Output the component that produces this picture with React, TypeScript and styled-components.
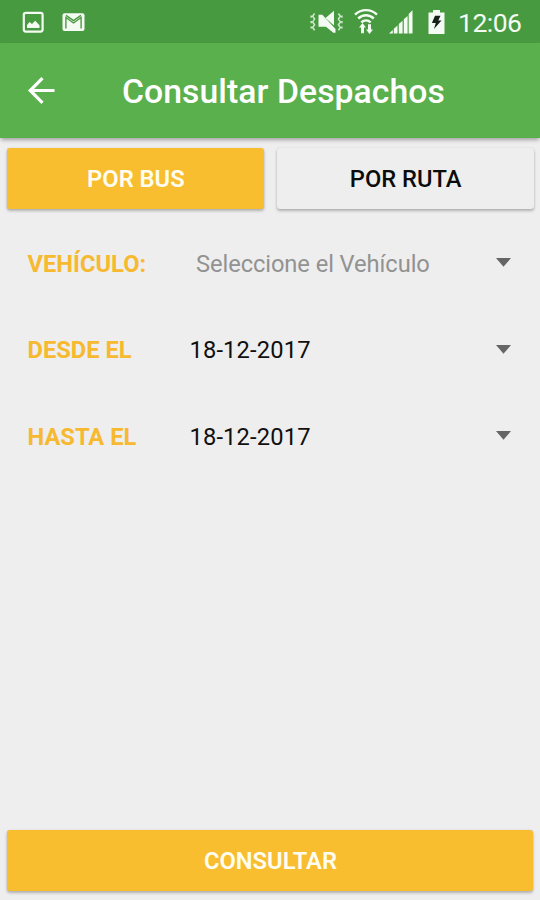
import React from "react";
import styled, { createGlobalStyle } from "styled-components";

const GlobalStyle = createGlobalStyle`
  * { box-sizing: border-box; }
  body {
    margin: 0;
    background: #eeeeee;
    font-family: Roboto, sans-serif;
  }
  button { font-family: inherit; cursor: pointer; }
`;

const Screen = styled.div`
  width: 540px;
  height: 900px;
  display: flex;
  flex-direction: column;
  overflow: hidden;
  background: #eeeeee;
`;

const StatusBar = styled.div`
  height: 43px;
  flex: none;
  display: flex;
  justify-content: space-between;
  padding: 0 18px 0 22px;
  background: #489a41;
  color: #f4fbf2;
`;

const StatusGroup = styled.div<{ $gap: number }>`
  display: flex;
  align-items: center;
  gap: ${(p) => p.$gap}px;

  svg { display: block; flex: none; }
`;

const StatusIcons = styled(StatusGroup)`
  margin-right: 2px;
`;

const Clock = styled.span`
  width: 64px;
  padding-top: 2px;
  font-size: 26.5px;
  line-height: 32px;
  letter-spacing: -0.5px;
  white-space: nowrap;
`;

const AppBar = styled.header`
  height: 95px;
  flex: none;
  display: flex;
  align-items: center;
  padding-left: 20px;
  background: #5ab04d;
  box-shadow: 0 3px 4px -1px rgba(0, 0, 0, 0.32);
  color: #fff;
`;

const BackButton = styled.button`
  width: 42px;
  height: 42px;
  padding: 0;
  border: 0;
  background: none;
  color: inherit;

  svg { display: block; }
`;

const Title = styled.h1`
  margin: 2px 0 0 60px;
  font-size: 33.75px;
  line-height: 40px;
  font-weight: 500;
  letter-spacing: 0.05px;
  white-space: nowrap;
`;

const Tabs = styled.div`
  display: flex;
  gap: 13px;
  padding: 10px 6.5px 0 7px;
`;

const Button = styled.button<{ $primary?: boolean }>`
  flex: 1;
  height: 61px;
  padding: 0 0 0 1px;
  border: 0;
  border-radius: 3px;
  background: ${(p) => (p.$primary ? "#f8be30" : "#eeeeee")};
  color: ${(p) => (p.$primary ? "#fffdf0" : "#0c0c0c")};
  font-size: 23.7px;
  font-weight: ${(p) => (p.$primary ? 600 : 500)};
  box-shadow: 0 2px 3px rgba(0, 0, 0, 0.25), 0 0 2px rgba(0, 0, 0, 0.1);
`;

const Form = styled.div`
  flex: 1;
  padding: 11px 29.5px 0 27.5px;
`;

const Row = styled.div`
  height: 86.5px;
  display: grid;
  grid-template-columns: 162px 1fr 15px;
  align-items: center;
  font-size: 23.7px;
  line-height: 30px;
  white-space: nowrap;

  svg { display: block; }
`;

const Label = styled.span`
  padding-top: 1px;
  color: #f6b92f;
  font-weight: 700;
`;

const Value = styled.span<{ $placeholder?: boolean }>`
  padding-top: 1px;
  padding-left: ${(p) => (p.$placeholder ? 6.5 : 0)}px;
  color: ${(p) => (p.$placeholder ? "#929292" : "#101010")};
  letter-spacing: ${(p) => (p.$placeholder ? -0.08 : 0.15)}px;
`;

const Footer = styled.footer`
  display: flex;
  padding: 0 7px 9px;
`;

const PictureIcon = () => (
  <svg width="22" height="22" viewBox="0 0 22 22">
    <rect x="1.8" y="1.8" width="18.8" height="18.8" rx="2" fill="none" stroke="currentColor" strokeWidth="2.2" />
    <path d="M5 17v-3l2.6-3 2.4 2 3.2-3.2 4.3 4.4V17z" fill="currentColor" />
  </svg>
);

const MailIcon = () => (
  <svg width="23" height="22" viewBox="0 0 23 22">
    <rect x="0.5" y="2.2" width="22" height="17.8" rx="2" fill="currentColor" />
    <path d="M3.9 17.5V6.5L11.5 12l7.6-5.5v11M4 4.4l7.5 5.2L19 4.4" fill="none" stroke="#489a41" strokeWidth="1.4" />
  </svg>
);

const VibrateMutedIcon = () => (
  <svg width="33" height="26" viewBox="0 0 33 26">
    <path d="M15.5 9L24 1.8v14.7z" fill="currentColor" />
    <path d="M8.5 5.8h3.8L25.5 20v3.7h-2.2L16 17.8H8.5z" fill="currentColor" />
    <path
      d="M4.6 4.5l-2 2.8 2 2.8-2 2.8 2 2.8-2 2.8 2 2.8M1.2 6.5v2.2M1.2 12v2.2M1.2 17.4v2.2M28.4 4.5l2 2.8-2 2.8 2 2.8-2 2.8 2 2.8-2 2.8M31.9 6.5v2.2M31.9 12v2.2M31.9 17.4v2.2"
      fill="none"
      stroke="currentColor"
      strokeWidth="1.5"
      opacity="0.8"
    />
  </svg>
);

const WifiIcon = () => (
  <svg width="24" height="28" viewBox="0 0 24 28">
    <g fill="none" stroke="currentColor" strokeWidth="2.4">
      <path d="M1 6.6c6.2-6 15.8-6 22 0" />
      <path d="M4.2 10.5c4.6-4.3 11-4.3 15.6 0" />
      <path d="M7.3 14.4c2.8-2.6 6.6-2.6 9.4 0" />
    </g>
    <path d="M8.5 15l3.4 4.6H10v5.7H7v-5.7H5z" fill="currentColor" />
    <path d="M15.5 26l-3.4-4.6H14v-5.2h3v5.2h2z" fill="currentColor" />
  </svg>
);

const SignalIcon = () => (
  <svg width="24" height="26" viewBox="0 0 24 26" fill="currentColor">
    <path d="M0 24.5L3.8 21v3.5zM4.8 19.8l3.7-3.2v7.9H4.8zM9.8 15l3.8-3.3v12.8H9.8zM14.8 10.2l3.8-3.3v17.6h-3.8zM19.7 5l3.8-3.8v23.3h-3.8z" />
  </svg>
);

const BatteryIcon = () => (
  <svg width="17" height="26" viewBox="0 0 17 26">
    <path d="M5 1h7v2.6h4.5V25H.5V3.6H5z" fill="currentColor" />
    <path d="M7 6.7h5.5l-2.2 4.7h3.2L6 20l1.7-5.9H3.9z" fill="#182219" />
  </svg>
);

const BackArrow = () => (
  <svg width="42" height="42" viewBox="0 0 42 42" fill="none" stroke="currentColor" strokeWidth="3.2">
    <path d="M34.5 20.5H10M22.5 8.2L10.2 20.5l12.3 12.3" />
  </svg>
);

const DropArrow = () => (
  <svg width="15" height="10" viewBox="0 0 15 10">
    <path d="M0 0h15L7.5 8.7z" fill="#656565" />
  </svg>
);

const fields = [
  { label: "VEHÍCULO:", value: "Seleccione el Vehículo", placeholder: true },
  { label: "DESDE EL", value: "18-12-2017" },
  { label: "HASTA EL", value: "18-12-2017" },
];

export default function App() {
  return (
    <>
      <GlobalStyle />
      <Screen>
        <StatusBar>
          <StatusGroup $gap={18}>
            <PictureIcon />
            <MailIcon />
          </StatusGroup>
          <StatusGroup $gap={13}>
            <StatusIcons $gap={11}>
              <VibrateMutedIcon />
              <WifiIcon />
              <SignalIcon />
            </StatusIcons>
            <BatteryIcon />
            <Clock>12:06</Clock>
          </StatusGroup>
        </StatusBar>
        <AppBar>
          <BackButton aria-label="Volver">
            <BackArrow />
          </BackButton>
          <Title>Consultar Despachos</Title>
        </AppBar>
        <Tabs>
          <Button $primary>POR BUS</Button>
          <Button>POR RUTA</Button>
        </Tabs>
        <Form>
          {fields.map((f) => (
            <Row key={f.label}>
              <Label>{f.label}</Label>
              <Value $placeholder={f.placeholder}>{f.value}</Value>
              <DropArrow />
            </Row>
          ))}
        </Form>
        <Footer>
          <Button $primary>CONSULTAR</Button>
        </Footer>
      </Screen>
    </>
  );
}
